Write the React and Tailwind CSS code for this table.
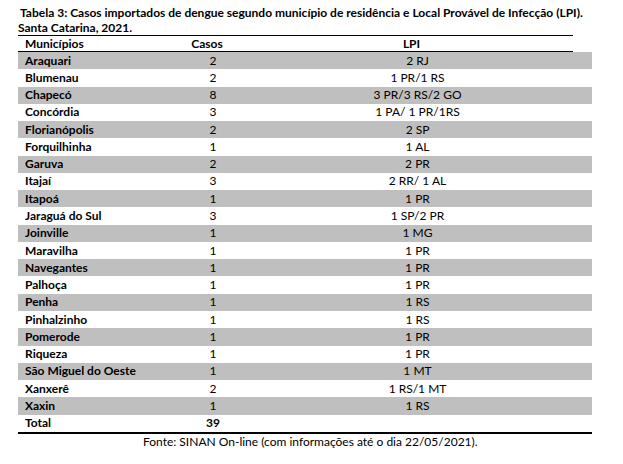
import React from "react";

const rows = [
  ["Araquari", "2", "2 RJ"],
  ["Blumenau", "2", "1 PR/1 RS"],
  ["Chapecó", "8", "3 PR/3 RS/2 GO"],
  ["Concórdia", "3", "1 PA/ 1 PR/1RS"],
  ["Florianópolis", "2", "2 SP"],
  ["Forquilhinha", "1", "1 AL"],
  ["Garuva", "2", "2 PR"],
  ["Itajaí", "3", "2 RR/ 1 AL"],
  ["Itapoá", "1", "1 PR"],
  ["Jaraguá do Sul", "3", "1 SP/2 PR"],
  ["Joinville", "1", "1 MG"],
  ["Maravilha", "1", "1 PR"],
  ["Navegantes", "1", "1 PR"],
  ["Palhoça", "1", "1 PR"],
  ["Penha", "1", "1 RS"],
  ["Pinhalzinho", "1", "1 RS"],
  ["Pomerode", "1", "1 PR"],
  ["Riqueza", "1", "1 PR"],
  ["São Miguel do Oeste", "1", "1 MT"],
  ["Xanxerê", "2", "1 RS/1 MT"],
  ["Xaxin", "1", "1 RS"],
];

export default function App() {
  return (
    <div className="w-[623px] h-[464px] bg-white text-black font-['Lato',sans-serif] text-[12px] leading-none">
      <div className="pl-[18px] pt-[6px] font-bold leading-[14.5px] whitespace-nowrap">
        <div className="pl-[2px]">Tabela 3: Casos importados de dengue segundo município de residência e Local Provável de Infecção (LPI).</div>
        <div>Santa Catarina, 2021.</div>
      </div>
      <div className="ml-[18px] w-[574px]">
        <div className="w-[555px] border-t border-b border-black grid grid-cols-[146px_86px_323px] h-[17px] font-bold items-center">
          <div className="pl-[7px]">Municípios</div>
          <div className="text-center">Casos</div>
          <div className="text-center">LPI</div>
        </div>
        {rows.map(([m, c, l], i) => (
          <div
            key={m}
            className={`grid grid-cols-[165px_60px_349px] h-[17.27px] items-center ${i % 2 === 0 ? "bg-[#bfbfbf]" : "bg-white"}`}
          >
            <div className="pl-[7px] font-bold">{m}</div>
            <div className="text-center">{c}</div>
            <div className="text-center">{l}</div>
          </div>
        ))}
        <div className="grid grid-cols-[165px_60px_349px] h-[17.3px] items-center font-bold border-b-2 border-black box-content">
          <div className="pl-[7px]">Total</div>
          <div className="text-center">39</div>
          <div></div>
        </div>
      </div>
      <div className="pl-[143px] pt-[2px] whitespace-nowrap">Fonte: SINAN On-line (com informações até o dia 22/05/2021).</div>
    </div>
  );
}
